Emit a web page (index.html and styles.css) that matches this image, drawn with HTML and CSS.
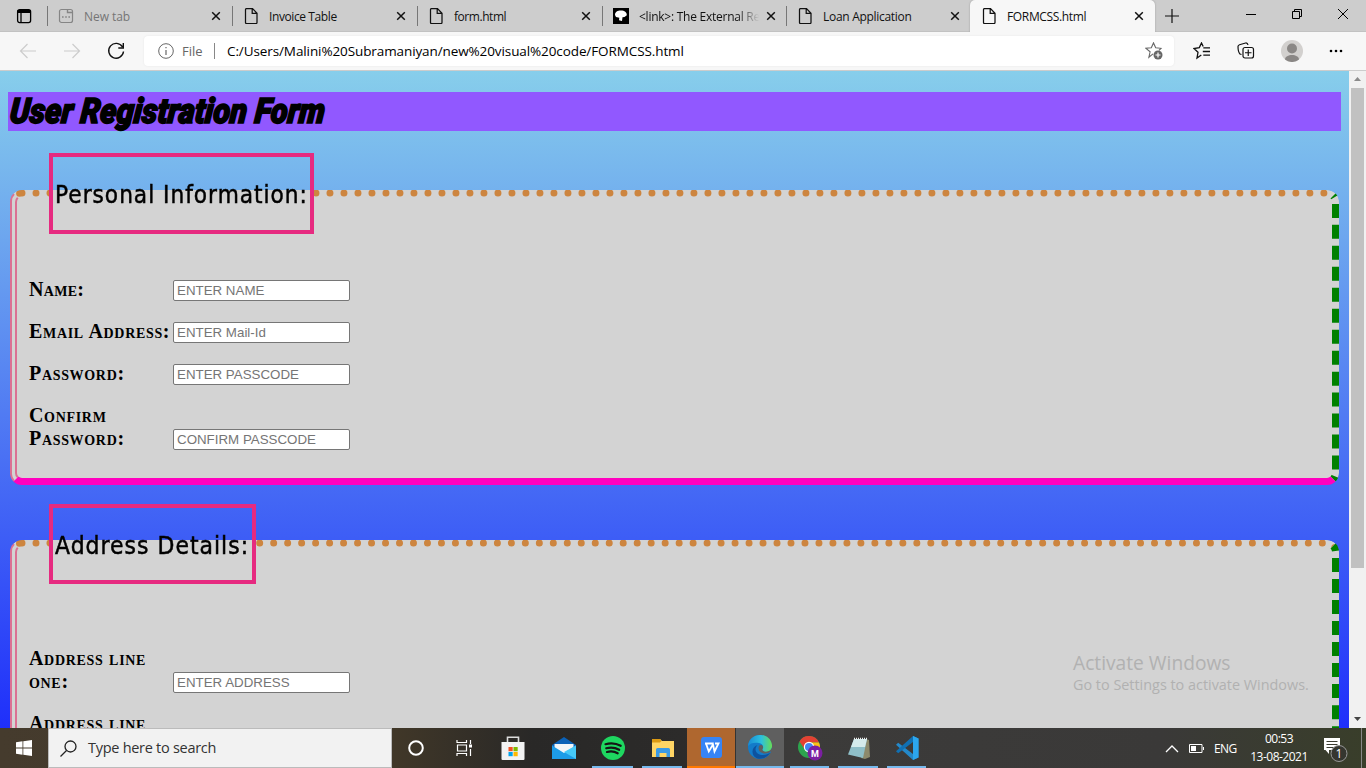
FILE: index.html
```html
<!DOCTYPE html>
<html lang="en">
<head>
<meta charset="utf-8">
<title>FORMCSS.html</title>
<link rel="stylesheet" href="styles.css">
</head>
<body>
<svg class="defs" width="0" height="0">
  <symbol id="close" viewBox="0 0 10 10"><path d="M1.2 1.2 8.8 8.8M8.8 1.2 1.2 8.8" fill="none" stroke="#111" stroke-width="1.5"/></symbol>
  <symbol id="doc" viewBox="0 0 16 16"><path d="M3.5.6h6L14 5.2v9.3a1 1 0 0 1-1 1H3.500a1 1 0 0 1-1-1V1.600a1 1 0 0 1 1-1zM9.200.8v4.600H14" fill="none" stroke="#111" stroke-width="1.250"/></symbol>
</svg>
<div class="screen">
  <header class="tabs">
    <div class="tab-actions"><svg width="16" height="16" viewBox="0 0 16 16"><rect x="1.600" y="1.600" width="13" height="13" rx="2" fill="none" stroke="#000" stroke-width="1.300"/><path d="M1.500 2h13v3h-13z"/><path d="M5 4v10.500" stroke="#000" stroke-width="1.300"/></svg></div>
    <div class="tab muted"><svg class="fav" width="16" height="16" viewBox="0 0 16 16"><rect x="1.500" y="1.500" width="13" height="13" rx="2" fill="none" stroke="#858585" stroke-width="1.200"/><path d="M9.500 1.500v3h5M4 9h1.600M7.200 9h1.600M10.400 9H12" fill="none" stroke="#858585" stroke-width="1.400"/></svg><span class="t1">New tab</span><svg class="x"><use href="#close"/></svg></div>
    <div class="tab"><svg class="fav"><use href="#doc"/></svg><span class="t2">Invoice Table</span><svg class="x"><use href="#close"/></svg></div>
    <div class="tab"><svg class="fav"><use href="#doc"/></svg><span class="t3">form.html</span><svg class="x"><use href="#close"/></svg></div>
    <div class="tab narrow"><svg class="fav" viewBox="0 0 16 16"><path d="M0 0h16v16H0z"/><path d="M2 7C2 4 4.500 2.600 8 2.600s6 2 5.800 4.600L11.500 9l-2 .3-.5 3.700-3-.7.3-2.600L3 9z" fill="#fff"/></svg><span class="t4">&lt;link&gt;: The External Re</span><svg class="x"><use href="#close"/></svg></div>
    <div class="tab narrow"><svg class="fav"><use href="#doc"/></svg><span class="t5">Loan Application</span><svg class="x"><use href="#close"/></svg></div>
    <div class="tab active"><svg class="fav"><use href="#doc"/></svg><span class="t6">FORMCSS.html</span><svg class="x"><use href="#close"/></svg></div>
    <svg class="plus" width="16" height="16" viewBox="0 0 16 16"><path d="M8 1v14M1 8h14" stroke="#111" stroke-width="1.200"/></svg>
    <div class="window-buttons">
      <svg width="12" height="12" viewBox="0 0 12 12"><path d="M1 6.500h10" stroke="#000"/></svg>
      <svg width="12" height="12" viewBox="0 0 12 12"><path d="M1.500 3.500h7v7h-7zM3.500 3.500v-2h7v7h-2" fill="none" stroke="#000"/></svg>
      <svg width="12" height="12" viewBox="0 0 12 12"><path d="m1 1 10 10M11 1 1 11" stroke="#000"/></svg>
    </div>
  </header>

  <div class="toolbar">
    <svg class="nav" viewBox="0 0 18 16"><path d="M17 8H1.500M8.500 1 1.500 8l7 7" fill="none" stroke="#ccc" stroke-width="1.200"/></svg>
    <svg class="nav" viewBox="0 0 18 16"><path d="M1 8h15.500M9.500 1l7 7-7 7" fill="none" stroke="#ccc" stroke-width="1.200"/></svg>
    <svg class="nav" viewBox="0 0 18 18"><path d="M15.500 5A7.400 7.400 0 1 0 16.500 9.500M16.300 1v5h-5" fill="none" stroke="#111" stroke-width="1.400"/></svg>
    <div class="address">
      <svg width="16" height="16" viewBox="0 0 16 16"><circle cx="8" cy="8" r="7.300" fill="none" stroke="#666"/><path d="M8 7v5M8 4v1.300" stroke="#666" stroke-width="1.200"/></svg>
      <span class="scheme">File</span><i class="bar"></i>
      <span class="url">C:/Users/Malini%20Subramaniyan/new%20visual%20code/FORMCSS.html</span>
      <svg class="star" width="18" height="18" viewBox="0 0 18 18"><path d="M8 11.800 3.900 15.200l1.200-5.400L1 6.300l5.300-.6L8.500.9l2.200 4.800 5.300.6-2 2" fill="none" stroke="#666" stroke-width="1.100"/><circle cx="13" cy="13" r="4.500" fill="#666"/><path d="M13 10.500v5M10.500 13h5" stroke="#fff" stroke-width="1.200"/></svg>
    </div>
    <div class="tools">
      <svg width="18" height="18" viewBox="0 0 18 18"><path d="M8.300 13 4 16l1-5.700-4-3.800 5.300-.9L8.500 1l1.700 3.500M10.300 5.800H17M9.800 9.500H17M10.300 13.200H17" fill="none" stroke="#111" stroke-width="1.300"/></svg>
      <svg width="18" height="18" viewBox="0 0 18 18"><path d="M4.500 12.500 3 12C1.500 10.500 1 7 1 4.500c0-1 .6-1.500 1.500-1.800L8.600 1C10 .8 10.700 1.400 11 3" fill="none" stroke="#111" stroke-width="1.200"/><rect x="6" y="5.500" width="10.500" height="10.500" rx="2" fill="#f7f7f7" stroke="#111" stroke-width="1.200"/><path d="M11.250 7.500v6.500M8 10.750h6.500" stroke="#111" stroke-width="1.200"/></svg>
      <svg width="22" height="22" viewBox="0 0 22 22"><circle cx="11" cy="11" r="11" fill="#d2d0ce"/><circle cx="11" cy="8.500" r="5" fill="#8a8785"/><path d="M4 19.500c0-6 14-6 14 0A11 11 0 0 1 4 19.500z" fill="#8a8785"/></svg>
      <svg width="14" height="18" viewBox="0 0 14 18"><circle cx="2" cy="9" r="1.300"/><circle cx="7" cy="9" r="1.300"/><circle cx="12" cy="9" r="1.300"/></svg>
    </div>
  </div>

  <div class="viewport">
    <main class="page">
      <h1><span>User Registration Form</span></h1>
      <fieldset class="personal">
        <legend><span>Personal Information:</span></legend>
        <div class="rows">
          <label><span class="name">Name:</span><input placeholder="ENTER NAME"></label>
          <label><span>Email Address:</span><input placeholder="ENTER Mail-Id"></label>
          <label><span>Password:</span><input placeholder="ENTER PASSCODE"></label>
          <label><span>Confirm<br>Password:</span><input placeholder="CONFIRM PASSCODE"></label>
        </div>
      </fieldset>
      <fieldset class="location">
        <legend><span>Address Details:</span></legend>
        <div class="rows">
          <label><span>Address line<br>one:</span><input placeholder="ENTER ADDRESS"></label>
          <label><span>Address line</span></label>
        </div>
      </fieldset>
    </main>
    <div class="scrollbar"><svg width="17" height="17"><path d="m5 10 3.500-4 3.500 4z" fill="#8b8b8b"/></svg><div class="thumb"></div><svg width="17" height="17"><path d="m5 6 3.500 4L12 6z" fill="#444"/></svg></div>
    <div class="watermark"><p class="w1"><span>Activate Windows</span></p><p class="w2"><span>Go to Settings to activate Windows.</span></p></div>
  </div>

  <footer class="taskbar">
    <div class="start"><svg width="16" height="16" viewBox="0 0 16 16"><path d="M0 2.200 6.500 1.300v6.300H0zM7.300 1.200 16 0v7.600H7.300zM0 8.400h6.500v6.300L0 13.800zM7.300 8.400H16V16l-8.700-1.200z" fill="#fff"/></svg></div>
    <div class="search"><svg width="17" height="17" viewBox="0 0 17 17"><circle cx="10.500" cy="6.500" r="5.500" fill="none" stroke="#222" stroke-width="1.300"/><path d="m6.500 10.500-6 6" stroke="#222" stroke-width="1.300"/></svg><span>Type here to search</span></div>
    <div class="apps">
      <div class="app"><svg width="16" height="16"><circle cx="8" cy="8" r="6.800" fill="none" stroke="#fff" stroke-width="2"/></svg></div>
      <div class="app"><svg width="16" height="16" viewBox="0 0 16 16" fill="none" stroke="#fff" stroke-width="1.200"><path d="M1 0v2.500h9.500V0M1.500 5h9v6h-9zM1 16v-2.500h9.500V16M14.500 0v4M14.500 9v7"/><path d="M13 4.500h3v3h-3z" fill="#fff" stroke="none"/></svg></div>
      <div class="app"><svg width="24" height="24" viewBox="0 0 24 24"><path d="M6.500 8V1.300h11V8" fill="none" stroke="#ddd" stroke-width="1.600"/><path d="M.5 6h23v17a1 1 0 0 1-1 1h-21a1 1 0 0 1-1-1z" fill="#f3f3f3"/><path d="M7.500 11h4.200v4.200H7.500z" fill="#f25022"/><path d="M12.500 11h4.200v4.200h-4.200z" fill="#7fba00"/><path d="M7.500 16h4.200v4.200H7.500z" fill="#00a4ef"/><path d="M12.500 16h4.200v4.200h-4.200z" fill="#ffb900"/></svg></div>
      <div class="app"><svg width="24" height="24" viewBox="0 0 24 24"><path d="M0 9 12 1l12 8v5H0z" fill="#0b62b8"/><path d="M2.500 8h19v9h-19z" fill="#f2f5f8"/><path d="M0 9.500 12 17l12-7.500V23H0z" fill="#1d9ce8"/><path d="m12 16 12-6.500V23z" fill="#46c9f8"/></svg></div>
      <div class="app on"><svg width="24" height="24" viewBox="0 0 24 24"><circle cx="12" cy="12" r="12" fill="#1ed760"/><path d="M4.500 8.200c5-1.500 10.500-1 15.200 1.600M5.200 12.300c4.500-1.300 9-.8 13 1.500M6 16c3.700-1 7.500-.6 10.700 1.300" fill="none" stroke="#151515" stroke-width="2.200" stroke-linecap="round"/></svg></div>
      <div class="app on"><svg width="22" height="20" viewBox="0 0 22 20"><path d="M0 1h8l2 2h12v16H0z" fill="#ffd564"/><path d="M0 1h8l1.500 2L8 4.500H0z" fill="#dc9a13"/><path d="M4 19v-7.500A1.500 1.500 0 0 1 5.500 10h11a1.500 1.500 0 0 1 1.500 1.500V19h-3.500v-4h-7v4z" fill="#3b9ae5"/></svg></div>
      <div class="app wps"><svg width="21" height="21" viewBox="0 0 21 21"><rect width="21" height="21" rx="3" fill="#3684f5"/><path d="M4 6.500h8.500M5 6.500l2.800 8L12 7.500l1.500 7L17.500 6.500H14" fill="none" stroke="#fff" stroke-width="1.800"/></svg></div>
      <div class="app current"><svg width="24" height="24" viewBox="0 0 24 24"><defs><linearGradient id="edge" x1="0" x2="1"><stop stop-color="#198bd4"/><stop offset=".55" stop-color="#2cc0df"/><stop offset="1" stop-color="#68dc55"/></linearGradient></defs><circle cx="12" cy="12" r="12" fill="#137bc9"/><path d="M0 11C1-3 22-4 24 10c.4 5-3 7-6.500 7-4 0-4-2-3-3.500 1.500-2.500-.5-5-3.500-5.500C6.500 7 2 8 0 11z" fill="url(#edge)"/><path d="M9.500 10c-4 4-1.500 9.500 4 10 4 .4 6.500-1 9-2.500C16 27 5 25 4.500 17c-.2-3.500 2-6 5-7z" fill="#0d529f"/><path d="M11 11c-1.500 4 1 7.500 6 7.500 3 0 4-1 6-2l1 .5V13l-1.500 2c-3 2.500-8 2-8-.5 0-1 1-1.500.5-3-.5-2-3-2-4-.5z" fill="#5f5f5f"/></svg></div>
      <div class="app on"><svg width="26" height="26" viewBox="0 0 26 26"><circle cx="12" cy="12" r="11" fill="#2da44e"/><path d="M2.500 6.500A11 11 0 0 1 22 7.500H12L7.500 14z" fill="#e34133"/><path d="M22 7.500A11 11 0 0 1 12 23l5-9-5-6.500z" fill="#fbc116"/><circle cx="12" cy="12" r="5.200" fill="#fff"/><circle cx="12" cy="12" r="4" fill="#4285f4"/><circle cx="18" cy="18" r="7.500" fill="#7b1fa2"/><text x="18" y="21.500" text-anchor="middle" fill="#fff" class="badge-letter">M</text></svg></div>
      <div class="app on"><svg width="24" height="24" viewBox="0 0 24 24"><path d="m19 3 3 1 1 17-5 2-4-1z" fill="#8d8a6c"/><path d="M7 3h13l-4 19-15-3.500z" fill="#8fbfc8"/><path d="M7 3h13l-2 8H4z" fill="#d5ebec"/><path d="M7 2.500h13" stroke="#eee" stroke-width="1.500" stroke-dasharray="1 1"/></svg></div>
      <div class="app on code"><svg width="24" height="24" viewBox="0 0 24 24"><path d="m18 0 5.500 2.500v19L18 24 1 8.800 3.200 6.800 18 18z" fill="#2489ca"/><path d="M18 0v6L3.200 17.200 1 15.200z" fill="#1070b3"/><path d="m18 0 5.500 2.500v19L18 24z" fill="#2ca7ef"/></svg></div>
    </div>
    <div class="tray">
      <svg width="14" height="9" viewBox="0 0 14 9"><path d="m1 8 6-6 6 6" fill="none" stroke="#fff" stroke-width="1.300"/></svg>
      <svg class="battery" width="15" height="9" viewBox="0 0 15 9"><path d="M.5.500h12.500v8H.500zM14.500 3v3" fill="none" stroke="#fff"/><path d="M2 2h5v5H2z" fill="#fff"/></svg>
      <span class="lang">ENG</span>
      <div class="clock"><span>00:53</span><span>13-08-2021</span></div>
      <svg class="notice" width="26" height="26" viewBox="0 0 26 26"><path d="M1 1h16v12H6v4l-3.500-4H1z" fill="#fff"/><path d="M3.500 4.500h11M3.500 7.500h11M3.500 10.500h7" stroke="#3c3d31"/><circle cx="16" cy="16.500" r="8" fill="#35362f" stroke="#999"/><text x="16" y="21" text-anchor="middle" fill="#fff" class="notice-count">1</text></svg>
      <i class="desktop"></i>
    </div>
  </footer>
</div>
</body>
</html>
```
FILE: styles.css
```css
* { box-sizing: border-box; }
body { margin: 0; overflow: hidden; font-family: "Open Sans", "Noto Sans", sans-serif; }
.defs { position: absolute; }
svg { display: block; flex: none; }
.screen { width: 1366px; height: 768px; display: flex; flex-direction: column; overflow: hidden; }

.tabs { height: 32px; flex: none; display: flex; background: #cdcdcd; font-size: 12px; color: #111; box-shadow: inset 0 -1px #c2c2c2; }
.tab-actions { width: 47px; padding: 8px 0 0 16px; }
.tab { width: 185px; display: flex; align-items: center; padding-left: 11px; position: relative; white-space: nowrap; }
.tab::before { content: ""; position: absolute; left: 0; top: 6px; width: 1px; height: 20px; background: #777; }
.tab.narrow { width: 184px; }
.tab.muted { color: #757575; }
.tab .fav { width: 16px; height: 16px; }
.tab span { margin-left: 10px; width: 120px; overflow: hidden; }
.tab .x { width: 10px; height: 10px; margin-left: 7px; }
.tab.active { background: #f7f7f7; border-radius: 5px 5px 0 0; box-shadow: 0 0 2px #999; width: 185px; }
.tab.active::before { display: none; }
.t1 { letter-spacing: -.05px; }
.t2 { letter-spacing: -.4px; }
.t3 { letter-spacing: -.45px; }
.t4 { letter-spacing: -.25px; -webkit-mask-image: linear-gradient(90deg, #000 82%, transparent); }
.t5 { letter-spacing: -.3px; }
.t6 { letter-spacing: -.35px; }
.plus { margin: 8px 0 0 9px; }
.window-buttons { display: flex; gap: 34px; margin: 8px 0 0 65px; }

.toolbar { height: 39px; flex: none; display: flex; align-items: center; background: #f7f7f7; border-bottom: 1px solid #ccc; padding-left: 19px; position: relative; }
.nav { width: 18px; height: 18px; margin-right: 26px; }
.address { width: 1030px; height: 30px; margin-left: -7px; background: #fff; border-radius: 4px; display: flex; align-items: center; padding-left: 14px; font-size: 13px; box-shadow: 0 0 2px #e5e5e5; }
.scheme { width: 25px; margin-left: 8px; color: #666; font-size: 13px; }
.bar { width: 1px; height: 16px; background: #888; margin-left: 7px; }
.url { margin-left: 12px; width: 920px; letter-spacing: -.1px; font-size: 13.5px; white-space: nowrap; }
.star { margin-left: -2px; }
.tools { display: flex; align-items: center; margin-left: 19px; gap: 26px; }

.viewport { height: 657px; flex: none; display: flex; overflow: hidden; position: relative; }
.page { width: 1349px; height: 853px; flex: none; padding: 21px 8px 0; background: linear-gradient(skyblue, blue); }
h1 { margin: 0 0 22px; height: 39px; background: #9158ff; padding-left: 2px; font: italic 900 35px/39px Roboto, sans-serif; white-space: nowrap; }
h1 span { display: inline-block; transform: scaleX(.885) skewX(-6deg); transform-origin: left; -webkit-text-stroke: 1.7px #000; }
fieldset { margin: 0 2px; padding: 0 12px; background: lightgray; border-width: 7px; border-radius: 12px; border-style: dotted dashed solid double; border-color: peru green #ff00bf palevioletred; }
.personal { height: 332px; }
.location { height: 420px; margin-top: 19px; }
legend { margin-left: 20px; padding: 0 2px; border: 4px solid #e62a80; font: 500 24px/77px "DejaVu Sans", sans-serif; white-space: nowrap; -webkit-text-stroke: .5px #000; }
.personal legend { width: 265px; height: 81px; }
.location legend { width: 207px; height: 79.9px; }
legend span { display: inline-block; transform-origin: left; letter-spacing: 1.1px; }
.personal legend span { transform: scaleX(.904); }
.location legend span { transform: scaleX(.915); }
.rows { display: grid; gap: 19px; padding-top: 44px; }
.location .rows { padding-top: 63px; }
label { display: grid; grid-template-columns: 144px 177px; align-items: end; font: bold 20px/23px "Liberation Serif", serif; font-variant: small-caps; white-space: nowrap; letter-spacing: .68px; }
.name { letter-spacing: .3px; }
input { width: 177px; height: 21px; padding: 1px 3px; border: 1px solid #767676; border-radius: 2px; font: 13.333px "Liberation Sans", Arial, sans-serif; }
input::placeholder { color: #757575; }
.scrollbar { width: 17px; background: #f1f1f1; display: flex; flex-direction: column; }
.thumb { width: 13px; height: 480px; margin: 0 2px auto; background: #c1c1c1; }
.watermark { position: absolute; left: 1073px; top: 579px; color: #b1b1b1; white-space: nowrap; }
.watermark p { margin: 0; }
.w1 { font-size: 19.2px; line-height: 25px; }
.w2 { font-size: 14.4px; line-height: 20px; }

.taskbar { height: 40px; flex: none; display: flex; background: linear-gradient(90deg, #453b2d, #403728 29%, #292827 39%, #2c2b2a 50%, #3c3b3a 57%, #3a3938 85%, #393e2a); color: #fff; }
.start { width: 48px; padding: 12px 16px; }
.search { width: 344px; background: #f2f2f2; border: 1px solid #bbb; display: flex; align-items: center; gap: 11px; padding-left: 11px; color: #333; font-size: 14.5px; white-space: nowrap; }
.search span { letter-spacing: -.28px; line-height: 22px; }
.apps { display: grid; grid-template-columns: 48px 47px 52px 49px 50px 49px 49px 50px 48px 49px 48px; }
.app { display: grid; place-items: center; position: relative; }
.on::after { content: ""; position: absolute; left: 4px; right: 5px; bottom: 0; height: 2px; background: #76b9ed; }
.wps { background: #af672f; border-bottom: 2px solid #ff7800; margin-right: 1px; }
.current { background: #5f5f5f; border-bottom: 2px solid #76b9ed; margin-right: 2px; }
.badge-letter { font: bold 9px Roboto, sans-serif; }
.tray { margin-left: auto; display: flex; align-items: center; font-size: 12px; }
.battery { margin-left: 10px; }
.lang { width: 24px; margin-left: 10px; letter-spacing: -.6px; }
.clock { width: 62px; margin-left: 10px; display: grid; text-align: center; line-height: 18px; letter-spacing: -.5px; white-space: nowrap; }
.notice { margin: 3px 0 0 13px; }
.notice-count { font: 12px "Open Sans", sans-serif; }
.desktop { width: 1px; height: 40px; background: #888; margin: 0 4px 0 12px; }
```
